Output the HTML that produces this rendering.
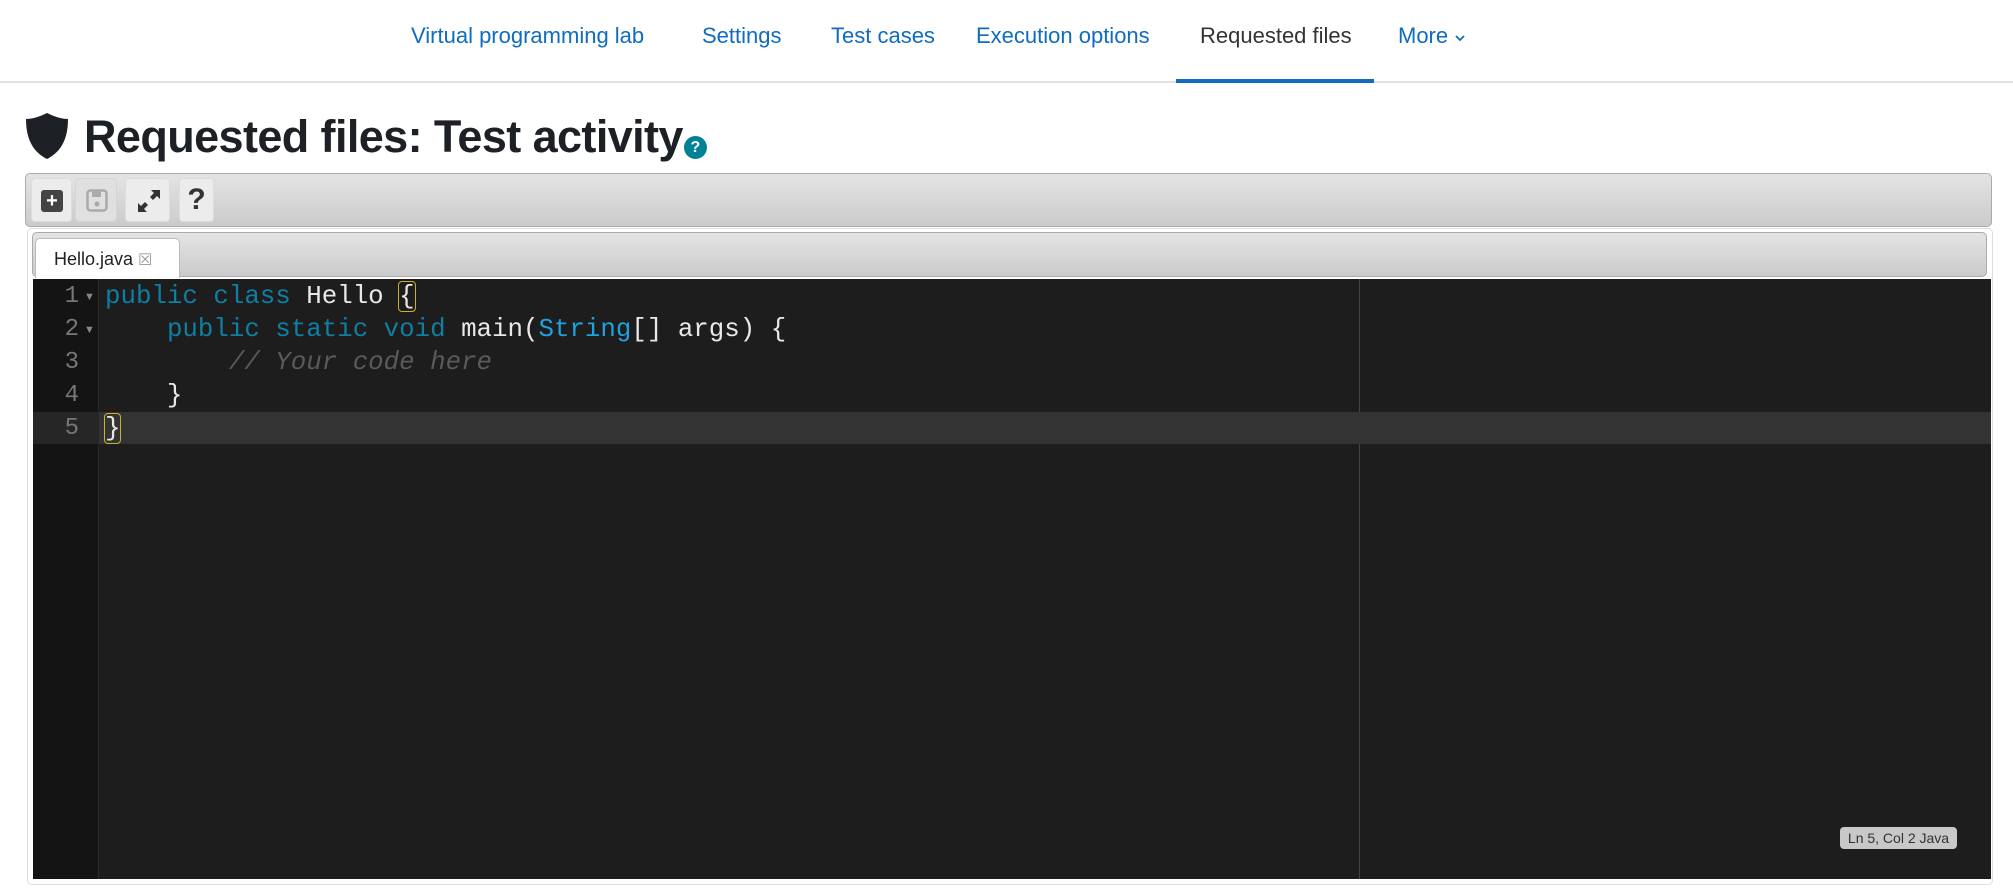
<!DOCTYPE html>
<html><head><meta charset="utf-8"><style>
*{box-sizing:border-box;margin:0;padding:0}
body{width:2013px;height:892px;background:#fff;font-family:"Liberation Sans",sans-serif;position:relative;overflow:hidden}
.nav{position:absolute;left:0;top:0;width:2013px;height:83px;border-bottom:2px solid #dee2e6}
.nav a{position:absolute;top:21px;font-size:22px;color:#0f6cbf;text-decoration:none;white-space:nowrap;line-height:30px}
.nav .act{color:#333}
.ind{position:absolute;left:1176px;top:79px;width:198px;height:4px;background:#0f6cbf}
h1{position:absolute;left:84px;top:107px;font-size:45px;font-weight:bold;color:#1d2125;white-space:nowrap;line-height:60px;letter-spacing:-0.6px}
.help{display:inline-block;vertical-align:baseline;margin-left:1px;width:23px;height:23px;border-radius:50%;background:#008196;color:#fff;font-size:16px;font-weight:bold;text-align:center;line-height:23px;letter-spacing:0}
.tb{position:absolute;left:25px;top:173px;width:1967px;height:54px;border:1px solid #aaa;border-radius:5px;background:linear-gradient(#e4e4e4,#cbcbcb)}
.btn{position:absolute;top:4px;height:44px;border:1px solid #ddd;border-radius:4px;background:#ececec}
.wrap{position:absolute;left:27px;top:228px;width:1966px;height:657px;border:1px solid #ddd;border-radius:5px}
.tabs{position:absolute;left:32px;top:232px;width:1955px;height:45px;border:1px solid #aaa;border-radius:5px;background:linear-gradient(#e4e4e4,#cbcbcb)}
.tab{position:absolute;left:35px;top:238px;width:145px;height:40px;background:#fff;border:1px solid #bbb;border-bottom:none;border-radius:5px 5px 0 0;font-size:18px;color:#222;padding:10px 0 0 18px}
.ed{position:absolute;left:33px;top:279px;width:1958px;height:600px;background:#1d1d1d}
.gut{position:absolute;left:0;top:0;width:66px;height:600px;background:#141414;border-right:1px solid #2a2a2a}
.pm{position:absolute;left:1326px;top:0;width:1px;height:600px;background:#444}
.al{position:absolute;left:0;top:133px;width:1958px;height:32px;background:#333}
.agl{position:absolute;left:0;top:133px;width:66px;height:32px;background:#262626}
.ln{position:absolute;left:0;width:46px;text-align:right;font-family:"Liberation Mono",monospace;font-size:24px;color:#777;line-height:33px}
.fa{position:absolute;left:51px;font-size:11px;color:#888}
.code{position:absolute;left:72px;top:0;font-family:"Liberation Mono",monospace;font-size:25.8px;line-height:33px;color:#e8e8e8;white-space:pre}
.k{color:#0f7ea3}.t{color:#1da2df}.c{color:#5a5a5a;font-style:italic}
.br{outline:1px solid #c9b12a;border-radius:3px}
.st{position:absolute;left:1840px;top:827px;width:117px;height:22px;background:#c8c8c8;border-radius:4px;font-size:14px;color:#333;text-align:center;line-height:22px}
</style></head><body>
<div class="nav">
<a style="left:411px">Virtual programming lab</a>
<a style="left:702px">Settings</a>
<a style="left:831px">Test cases</a>
<a style="left:976px">Execution options</a>
<a class="act" style="left:1200px">Requested files</a>
<a style="left:1398px">More <svg width="12" height="10" viewBox="0 0 12 10"><path d="M2 3l4 4 4-4" stroke="#0f6cbf" stroke-width="1.8" fill="none"/></svg></a>
<div class="ind"></div>
</div>
<svg style="position:absolute;left:25px;top:113px" width="44" height="46" viewBox="0 0 44 46"><path d="M22 0C14 4 7 6 1 6C1 26 8 39 22 46C36 39 43 26 43 6C37 6 30 4 22 0Z" fill="#1d2125"/></svg>
<h1>Requested files: Test activity<span class="help">?</span></h1>
<div class="tb">
<div class="btn" style="left:5px;width:41px"><div style="position:absolute;left:9px;top:11px;width:22px;height:22px;background:#444;border-radius:3px;color:#fff;font-weight:bold;font-size:20px;text-align:center;line-height:22px">+</div></div>
<div class="btn" style="left:49px;width:42px;background:#e0e0e0;border-color:#d4d4d4"><svg style="position:absolute;left:10px;top:10px" width="22" height="23" viewBox="0 0 22 23"><rect x="1.5" y="1.5" width="19" height="20" rx="3" fill="none" stroke="#aaa" stroke-width="2.5"/><rect x="6" y="2" width="9" height="6" fill="#aaa"/><circle cx="11" cy="15" r="2.5" fill="#aaa"/></svg></div>
<div class="btn" style="left:99px;width:45px"><svg style="position:absolute;left:9px;top:8px" width="28" height="28" viewBox="0 0 28 28"><path d="M16 3h9v9l-3-3-4 4-3-3 4-4zM12 25H3v-9l3 3 4-4 3 3-4 4z" fill="#333"/></svg></div>
<div class="btn" style="left:153px;width:35px;font-size:30px;font-weight:bold;text-align:center;line-height:42px;color:#333">?</div>
</div>
<div class="wrap"></div>
<div class="tabs"></div>
<div class="tab">Hello.java <span style="color:#999;font-size:16px">&#x2612;</span></div>
<div class="ed">
<div class="gut"></div>
<div class="pm"></div>
<div class="al"></div><div class="agl"></div>
<div class="ln" style="top:1px">1</div><div class="fa" style="top:12px">▼</div>
<div class="ln" style="top:34px">2</div><div class="fa" style="top:45px">▼</div>
<div class="ln" style="top:67px">3</div>
<div class="ln" style="top:100px">4</div>
<div class="ln" style="top:133px">5</div>
<div class="code" style="top:1px"><span class="k">public class</span> Hello <span class="br">{</span>
    <span class="k">public static void</span> main(<span class="t">String</span>[] args) {
        <span class="c">// Your code here</span>
    }
<span class="br">}</span></div>
</div>
<div class="st">Ln 5, Col 2 Java</div>
</body></html>
